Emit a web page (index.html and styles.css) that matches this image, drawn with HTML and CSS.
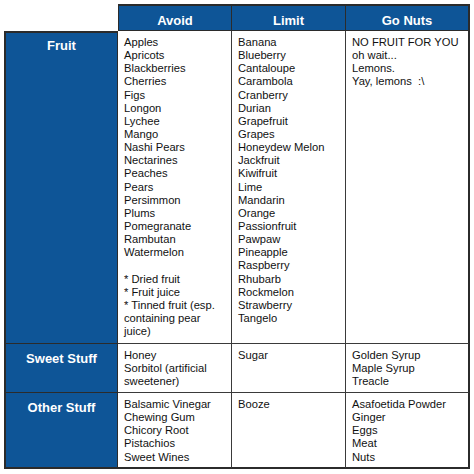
FILE: index.html
```html
<!DOCTYPE html>
<html>
<head>
<meta charset="utf-8">
<link rel="stylesheet" href="styles.css">
</head>
<body>
<div class="table">
  <div class="corner"></div>
  <div class="head first">Avoid</div>
  <div class="head">Limit</div>
  <div class="head">Go Nuts</div>

  <div class="rowhead top">Fruit</div>
  <div class="cell">Apples<br>Apricots<br>Blackberries<br>Cherries<br>Figs<br>Longon<br>Lychee<br>Mango<br>Nashi Pears<br>Nectarines<br>Peaches<br>Pears<br>Persimmon<br>Plums<br>Pomegranate<br>Rambutan<br>Watermelon<br><br>* Dried fruit<br>* Fruit juice<br>* Tinned fruit (esp. containing pear juice)</div>
  <div class="cell">Banana<br>Blueberry<br>Cantaloupe<br>Carambola<br>Cranberry<br>Durian<br>Grapefruit<br>Grapes<br>Honeydew Melon<br>Jackfruit<br>Kiwifruit<br>Lime<br>Mandarin<br>Orange<br>Passionfruit<br>Pawpaw<br>Pineapple<br>Raspberry<br>Rhubarb<br>Rockmelon<br>Strawberry<br>Tangelo</div>
  <div class="cell">NO FRUIT FOR YOU<br>oh wait...<br>Lemons.<br>Yay, lemons&nbsp; :\</div>

  <div class="rowhead">Sweet Stuff</div>
  <div class="cell">Honey<br>Sorbitol (artificial sweetener)</div>
  <div class="cell">Sugar</div>
  <div class="cell">Golden Syrup<br>Maple Syrup<br>Treacle</div>

  <div class="rowhead">Other Stuff</div>
  <div class="cell">Balsamic Vinegar<br>Chewing Gum<br>Chicory Root<br>Pistachios<br>Sweet Wines</div>
  <div class="cell">Booze</div>
  <div class="cell">Asafoetida Powder<br>Ginger<br>Eggs<br>Meat<br>Nuts</div>
</div>
</body>
</html>
```
FILE: styles.css
```css
html, body {
  margin: 0;
  padding: 0;
  background: #ffffff;
}
body {
  padding: 4px;
  font-family: "Liberation Sans", Arial, sans-serif;
}
.table {
  display: grid;
  grid-template-columns: 114px 114px 114px 124px;
  grid-template-rows: 27px 313px 49px 76px;
  width: 466px;
}
.table > div {
  box-sizing: border-box;
}
.corner {
  background: transparent;
}
.head {
  background: #0e5597;
  color: #ffffff;
  font-weight: bold;
  font-size: 13px;
  line-height: 15px;
  text-align: center;
  padding-top: 7px;
  border-top: 2px solid #2b2b2b;
  border-right: 1px solid #2b2b2b;
  border-bottom: 1px solid #2b2b2b;
}
.head.first {
  border-left: 1px solid #2b2b2b;
}
.table > .head:nth-child(4) {
  border-right: 2px solid #2b2b2b;
}
.rowhead {
  background: #0e5597;
  color: #ffffff;
  font-weight: bold;
  font-size: 13px;
  line-height: 15px;
  text-align: center;
  padding-top: 7px;
  border-left: 2px solid #2b2b2b;
  border-right: 1px solid #2b2b2b;
  border-bottom: 1px solid #2b2b2b;
}
.rowhead.top {
  border-top: 2px solid #2b2b2b;
  padding-top: 5px;
}
.cell {
  color: #111111;
  font-size: 11.2px;
  line-height: 13.14px;
  padding: 5px 4px 0 6px;
  border-right: 1px solid #3a3a3a;
  border-bottom: 1px solid #3a3a3a;
}
.table > div:nth-child(4n) {
  border-right: 2px solid #2b2b2b;
}
.table > div:nth-last-child(-n+4) {
  border-bottom: 2px solid #2b2b2b;
}
```
